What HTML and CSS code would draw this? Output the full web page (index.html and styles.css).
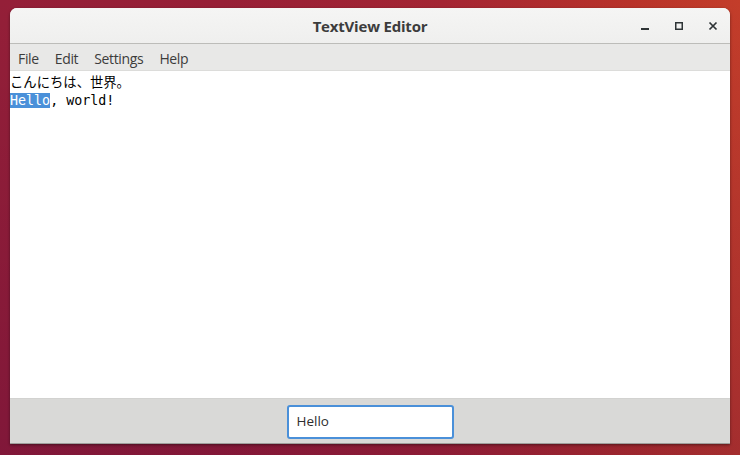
FILE: index.html
```html
<!DOCTYPE html>
<html lang="en">
<head>
<meta charset="utf-8">
<title>TextView Editor</title>
<link rel="stylesheet" href="styles.css">
</head>
<body>
<div class="desktop">
  <div class="window">
    <header class="titlebar">
      <span class="title">TextView Editor</span>
      <div class="controls">
        <svg class="ctl" width="10" height="10" viewBox="0 0 10 10"><rect x="1" y="7" width="8" height="2" fill="#2e3436"/></svg>
        <svg class="ctl" width="10" height="10" viewBox="0 0 10 10"><rect x="1.75" y="1.75" width="6.5" height="6.5" fill="none" stroke="#2e3436" stroke-width="1.5"/></svg>
        <svg class="ctl" width="10" height="10" viewBox="0 0 10 10"><path d="M1.5 1.5 L8.5 8.5 M8.5 1.5 L1.5 8.5" stroke="#2e3436" stroke-width="1.7"/></svg>
      </div>
    </header>
    <nav class="menubar">
      <span class="menu">File</span>
      <span class="menu">Edit</span>
      <span class="menu">Settings</span>
      <span class="menu">Help</span>
    </nav>
    <main class="textview">
      <div class="line">こんにちは、世界。</div>
      <div class="line"><span class="sel">Hello</span>, world!</div>
    </main>
    <footer class="bottombar">
      <div class="entry">Hello</div>
    </footer>
  </div>
</div>
</body>
</html>
```
FILE: styles.css
```css
html, body {
  margin: 0;
  padding: 0;
  width: 740px;
  height: 455px;
  overflow: hidden;
}
.desktop {
  width: 740px;
  height: 455px;
  box-sizing: border-box;
  padding: 8px 10px 0 10px;
  background:
    linear-gradient(180deg, rgba(0,0,0,0) 0%, rgba(70,0,60,0.25) 100%),
    linear-gradient(90deg, #941f38 0%, #971f36 30%, #a42533 60%, #b83229 85%, #c33d2a 100%);
}
.window {
  width: 720px;
  height: 436px;
  display: flex;
  flex-direction: column;
  border-radius: 7px 7px 0 0;
  overflow: hidden;
  background: #ffffff;
  box-shadow: 0 1px 3px rgba(0,0,0,0.45);
}
.titlebar {
  position: relative;
  height: 35px;
  flex: none;
  display: flex;
  align-items: center;
  justify-content: center;
  background: linear-gradient(#f5f5f4, #efefee);
  border-bottom: 1px solid #bcbcb9;
}
.title {
  font-family: "Open Sans", "Noto Sans", sans-serif;
  font-weight: 700;
  font-size: 15px;
  color: #3c3c3c;
  letter-spacing: -0.2px;
}
.controls {
  position: absolute;
  right: 12px;
  top: 13px;
  display: flex;
  gap: 24px;
}
.ctl { display: block; }
.menubar {
  height: 27px;
  flex: none;
  display: flex;
  align-items: center;
  box-sizing: border-box;
  padding-left: 8px;
  padding-top: 3px;
  background: #e8e8e7;
  border-bottom: 1px solid #dcdcda;
  font-family: "Open Sans", "Noto Sans", sans-serif;
  font-size: 14px;
  color: #3c3c3c;
}
.menu {
  margin-right: 16px;
  letter-spacing: -0.35px;
}
.textview {
  flex: 1;
  background: #ffffff;
  padding-top: 3px;
  font-family: "DejaVu Sans Mono", "Noto Sans CJK JP", monospace;
  font-size: 13.33px;
  color: #000000;
}
.line {
  height: 18px;
  line-height: 18px;
  white-space: pre;
}
.sel {
  background: #4a90d9;
  color: #ffffff;
}
.bottombar {
  height: 46px;
  flex: none;
  display: flex;
  justify-content: center;
  align-items: flex-start;
  padding-top: 6px;
  box-sizing: border-box;
  background: #d9d9d7;
  border-top: 1px solid #d2d2d0;
  border-bottom: 1px solid #9e9e9b;
}
.entry {
  width: 163px;
  height: 30px;
  border: 2px solid #4a90d9;
  border-radius: 3px;
  background: #ffffff;
  font-family: "Open Sans", "Noto Sans", sans-serif;
  font-size: 13.5px;
  line-height: 29px;
  color: #2e2e2e;
  text-indent: 8px;
}
```
